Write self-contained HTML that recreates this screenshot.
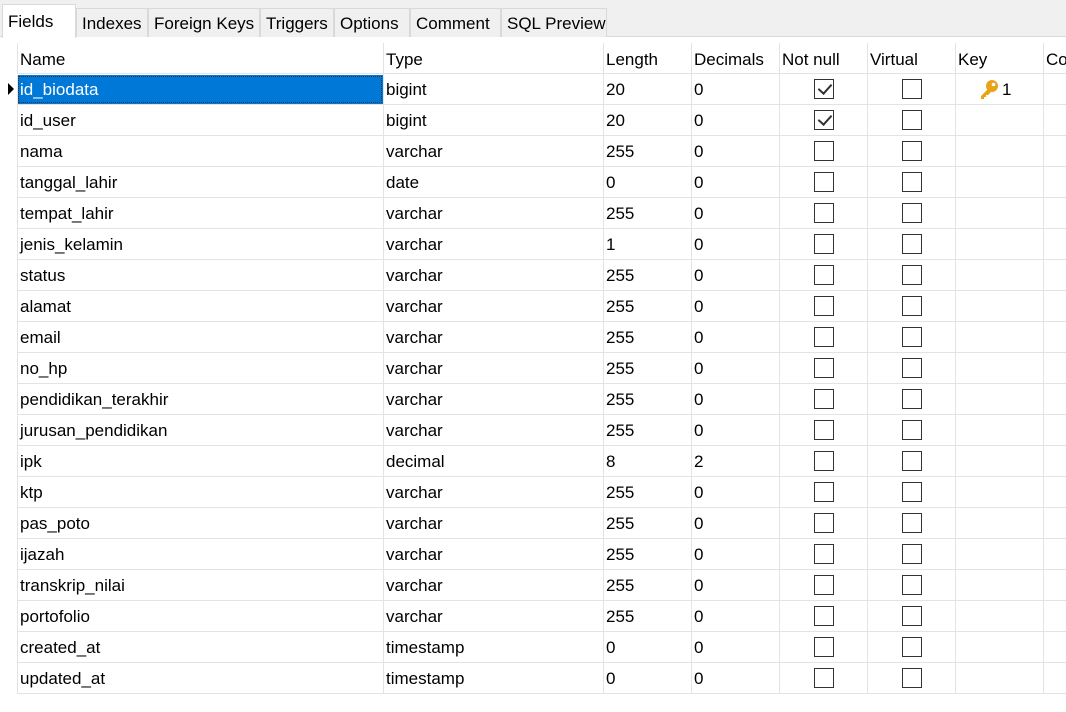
<!DOCTYPE html>
<html><head><meta charset="utf-8"><style>
*{margin:0;padding:0;box-sizing:border-box}
body{width:1066px;height:712px;overflow:hidden;background:#fff;font-family:"Liberation Sans",Arial,sans-serif;font-size:17px;color:#000;position:relative}
#bar{position:absolute;left:0;top:0;width:1066px;height:37px;background:#f0f0f0;border-bottom:1px solid #d9d9d9}
.tab{position:absolute;top:8px;height:29px;border:1px solid #d9d9d9;border-bottom:none;background:#f0f0f0;padding:5px 0 0 5px;font-size:17px}
.tab.sel{top:4px;height:34px;background:#fff;padding-top:7px}
.row{position:absolute;left:17px;height:31px;width:1049px;border-bottom:1px solid #e3e3e3}
.c{position:absolute;top:0;height:30px;line-height:32px;padding-left:2px;border-left:1px solid #e3e3e3;white-space:nowrap}
.c1{left:0;width:366px}.c2{left:366px;width:220px}.c3{left:586px;width:88px}.c4{left:674px;width:88px}
.c5{left:762px;width:88px}.c6{left:850px;width:88px}.c7{left:938px;width:88px}.c8{left:1026px;width:30px}
.cb{position:absolute;top:5px;left:34px;width:20px;height:20px;border:1px solid #333;background:#fff}
.ck::after{content:"";position:absolute;left:6px;top:1px;width:6px;height:11px;border-right:2px solid #333;border-bottom:2px solid #333;transform:rotate(42deg)}
.hdr{top:43px;height:31px}
.hdr .c{line-height:34px}
.sel1{background:#0078d7;color:#fff;outline:1px dotted #333;outline-offset:-2px;height:29px;top:1px;line-height:30px}
</style></head><body>
<div id="bar"></div>
<div class="tab sel" style="left:2px;width:74px">Fields</div>
<div class="tab" style="left:76px;width:72px">Indexes</div>
<div class="tab" style="left:148px;width:112px">Foreign Keys</div>
<div class="tab" style="left:260px;width:74px">Triggers</div>
<div class="tab" style="left:334px;width:76px">Options</div>
<div class="tab" style="left:410px;width:91px">Comment</div>
<div class="tab" style="left:501px;width:106px">SQL Preview</div>

<div class="row hdr"><div class="c c1">Name</div><div class="c c2">Type</div><div class="c c3">Length</div><div class="c c4">Decimals</div><div class="c c5">Not null</div><div class="c c6">Virtual</div><div class="c c7">Key</div><div class="c c8">Co</div></div>

<div style="position:absolute;left:8px;top:83px;width:0;height:0;border-top:6px solid transparent;border-bottom:6px solid transparent;border-left:6px solid #000"></div>

<div class="row" style="top:74px"><div class="c c1 sel1">id_biodata</div><div class="c c2">bigint</div><div class="c c3">20</div><div class="c c4">0</div><div class="c c5"><div class="cb ck"></div></div><div class="c c6"><div class="cb"></div></div><div class="c c7"><svg style="position:absolute;left:22px;top:5px" width="22" height="22" viewBox="0 0 22 22"><circle cx="14" cy="7" r="6" fill="#e8a317"/><circle cx="15.5" cy="5.5" r="1.8" fill="#fff"/><path d="M10 10 L3 17 L3 20 L6 20 L6 18 L8 18 L8 16 L10 16 L13 13 Z" fill="#e8a317"/></svg><span style="position:absolute;left:46px">1</span></div><div class="c c8"></div></div>
<div class="row" style="top:105px"><div class="c c1">id_user</div><div class="c c2">bigint</div><div class="c c3">20</div><div class="c c4">0</div><div class="c c5"><div class="cb ck"></div></div><div class="c c6"><div class="cb"></div></div><div class="c c7"></div><div class="c c8"></div></div>
<div class="row" style="top:136px"><div class="c c1">nama</div><div class="c c2">varchar</div><div class="c c3">255</div><div class="c c4">0</div><div class="c c5"><div class="cb"></div></div><div class="c c6"><div class="cb"></div></div><div class="c c7"></div><div class="c c8"></div></div>
<div class="row" style="top:167px"><div class="c c1">tanggal_lahir</div><div class="c c2">date</div><div class="c c3">0</div><div class="c c4">0</div><div class="c c5"><div class="cb"></div></div><div class="c c6"><div class="cb"></div></div><div class="c c7"></div><div class="c c8"></div></div>
<div class="row" style="top:198px"><div class="c c1">tempat_lahir</div><div class="c c2">varchar</div><div class="c c3">255</div><div class="c c4">0</div><div class="c c5"><div class="cb"></div></div><div class="c c6"><div class="cb"></div></div><div class="c c7"></div><div class="c c8"></div></div>
<div class="row" style="top:229px"><div class="c c1">jenis_kelamin</div><div class="c c2">varchar</div><div class="c c3">1</div><div class="c c4">0</div><div class="c c5"><div class="cb"></div></div><div class="c c6"><div class="cb"></div></div><div class="c c7"></div><div class="c c8"></div></div>
<div class="row" style="top:260px"><div class="c c1">status</div><div class="c c2">varchar</div><div class="c c3">255</div><div class="c c4">0</div><div class="c c5"><div class="cb"></div></div><div class="c c6"><div class="cb"></div></div><div class="c c7"></div><div class="c c8"></div></div>
<div class="row" style="top:291px"><div class="c c1">alamat</div><div class="c c2">varchar</div><div class="c c3">255</div><div class="c c4">0</div><div class="c c5"><div class="cb"></div></div><div class="c c6"><div class="cb"></div></div><div class="c c7"></div><div class="c c8"></div></div>
<div class="row" style="top:322px"><div class="c c1">email</div><div class="c c2">varchar</div><div class="c c3">255</div><div class="c c4">0</div><div class="c c5"><div class="cb"></div></div><div class="c c6"><div class="cb"></div></div><div class="c c7"></div><div class="c c8"></div></div>
<div class="row" style="top:353px"><div class="c c1">no_hp</div><div class="c c2">varchar</div><div class="c c3">255</div><div class="c c4">0</div><div class="c c5"><div class="cb"></div></div><div class="c c6"><div class="cb"></div></div><div class="c c7"></div><div class="c c8"></div></div>
<div class="row" style="top:384px"><div class="c c1">pendidikan_terakhir</div><div class="c c2">varchar</div><div class="c c3">255</div><div class="c c4">0</div><div class="c c5"><div class="cb"></div></div><div class="c c6"><div class="cb"></div></div><div class="c c7"></div><div class="c c8"></div></div>
<div class="row" style="top:415px"><div class="c c1">jurusan_pendidikan</div><div class="c c2">varchar</div><div class="c c3">255</div><div class="c c4">0</div><div class="c c5"><div class="cb"></div></div><div class="c c6"><div class="cb"></div></div><div class="c c7"></div><div class="c c8"></div></div>
<div class="row" style="top:446px"><div class="c c1">ipk</div><div class="c c2">decimal</div><div class="c c3">8</div><div class="c c4">2</div><div class="c c5"><div class="cb"></div></div><div class="c c6"><div class="cb"></div></div><div class="c c7"></div><div class="c c8"></div></div>
<div class="row" style="top:477px"><div class="c c1">ktp</div><div class="c c2">varchar</div><div class="c c3">255</div><div class="c c4">0</div><div class="c c5"><div class="cb"></div></div><div class="c c6"><div class="cb"></div></div><div class="c c7"></div><div class="c c8"></div></div>
<div class="row" style="top:508px"><div class="c c1">pas_poto</div><div class="c c2">varchar</div><div class="c c3">255</div><div class="c c4">0</div><div class="c c5"><div class="cb"></div></div><div class="c c6"><div class="cb"></div></div><div class="c c7"></div><div class="c c8"></div></div>
<div class="row" style="top:539px"><div class="c c1">ijazah</div><div class="c c2">varchar</div><div class="c c3">255</div><div class="c c4">0</div><div class="c c5"><div class="cb"></div></div><div class="c c6"><div class="cb"></div></div><div class="c c7"></div><div class="c c8"></div></div>
<div class="row" style="top:570px"><div class="c c1">transkrip_nilai</div><div class="c c2">varchar</div><div class="c c3">255</div><div class="c c4">0</div><div class="c c5"><div class="cb"></div></div><div class="c c6"><div class="cb"></div></div><div class="c c7"></div><div class="c c8"></div></div>
<div class="row" style="top:601px"><div class="c c1">portofolio</div><div class="c c2">varchar</div><div class="c c3">255</div><div class="c c4">0</div><div class="c c5"><div class="cb"></div></div><div class="c c6"><div class="cb"></div></div><div class="c c7"></div><div class="c c8"></div></div>
<div class="row" style="top:632px"><div class="c c1">created_at</div><div class="c c2">timestamp</div><div class="c c3">0</div><div class="c c4">0</div><div class="c c5"><div class="cb"></div></div><div class="c c6"><div class="cb"></div></div><div class="c c7"></div><div class="c c8"></div></div>
<div class="row" style="top:663px"><div class="c c1">updated_at</div><div class="c c2">timestamp</div><div class="c c3">0</div><div class="c c4">0</div><div class="c c5"><div class="cb"></div></div><div class="c c6"><div class="cb"></div></div><div class="c c7"></div><div class="c c8"></div></div>
</body></html>
